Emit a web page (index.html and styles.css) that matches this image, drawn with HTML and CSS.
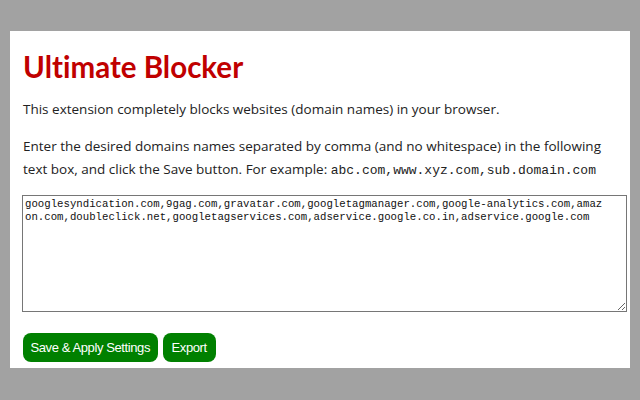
FILE: index.html
```html
<!DOCTYPE html>
<html lang="en">
<head>
    <meta charset="UTF-8">
    <title>Ultimate Blocker - Options</title>
    <link rel="stylesheet" href="styles.css">
</head>
<body>
    <div class="panel">
        <h1>Ultimate Blocker</h1>
        <p>This extension completely blocks websites (domain names) in your browser.</p>
        <p>Enter the desired domains names separated by comma (and no whitespace) in the following text box, and click the Save button. For example: <code>abc.com,www.xyz.com,sub.domain.com</code></p>
        <textarea id="domains" spellcheck="false">googlesyndication.com,9gag.com,gravatar.com,googletagmanager.com,google-analytics.com,amazon.com,doubleclick.net,googletagservices.com,adservice.google.co.in,adservice.google.com</textarea>
        <div class="actions">
            <button id="save">Save &amp; Apply Settings</button>
            <button id="export" class="wide">Export</button>
        </div>
    </div>
</body>
</html>
```

FILE: styles.css
```css
body {
    margin: 0;
    padding: 31px 10px 0;
    background-color: #a2a2a2;
    font-family: "Open Sans", sans-serif;
    color: #222;
    height: 400px;
    box-sizing: border-box;
}
.panel {
    background-color: #fff;
    padding: 18px 12px 6px 13px;
}
h1 {
    margin: 0 0 13px;
    font-family: Lato, sans-serif;
    font-size: 29.5px;
    font-weight: bold;
    font-variant-ligatures: none;
    line-height: 36px;
    color: #c00000;
}
p {
    margin: 0;
    font-size: 13.5px;
    line-height: 22.5px;
}
p + p {
    margin-top: 14.5px;
}
code {
    font-family: "Liberation Mono", monospace;
    font-size: 13px;
    line-height: 1;
}
textarea {
    display: block;
    width: 605px;
    height: 117px;
    box-sizing: border-box;
    margin: 15px 0 0 -1px;
    padding: 2px 20px 2px 2px;
    border: 1px solid #767676;
    font-family: "Liberation Mono", monospace;
    font-size: 10.7px;
    line-height: 13px;
    color: #111;
    word-break: break-all;
    resize: both;
}
.actions {
    display: flex;
    gap: 5px;
    margin-top: 21px;
}
button {
    padding: 0 7.5px;
    height: 29px;
    background-color: #008000;
    color: #fff;
    border: none;
    border-radius: 8px;
    font-family: "Liberation Sans", Arial, sans-serif;
    font-size: 13px;
    letter-spacing: -0.4px;
    cursor: pointer;
}
button.wide {
    padding: 0 9px;
}
```
